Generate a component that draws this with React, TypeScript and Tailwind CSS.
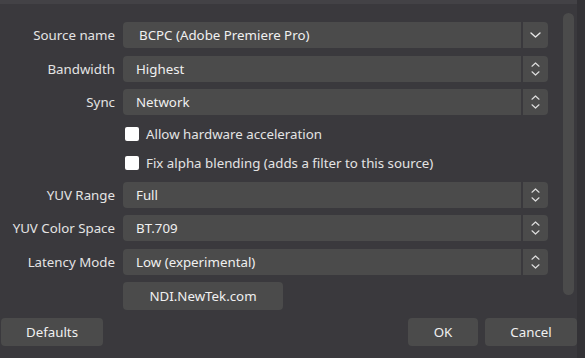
import React from "react";

const font = { fontFamily: '"Noto Sans", "Open Sans", sans-serif' };

function ChevronDown({ w = 11, h = 6 }: { w?: number; h?: number }) {
  return (
    <svg width={w} height={h} viewBox="0 0 11 6" fill="none">
      <path d="M1 1 L5.5 5 L10 1" stroke="#e6e6e6" strokeWidth="1.4" strokeLinecap="round" strokeLinejoin="round" />
    </svg>
  );
}

function Spinner() {
  return (
    <div className="flex flex-col items-center gap-[4px]">
      <svg width="9" height="5" viewBox="0 0 9 5" fill="none">
        <path d="M1 4.2 L4.5 1 L8 4.2" stroke="#dcdcdc" strokeWidth="1.2" strokeLinecap="round" strokeLinejoin="round" />
      </svg>
      <svg width="9" height="5" viewBox="0 0 9 5" fill="none">
        <path d="M1 0.8 L4.5 4 L8 0.8" stroke="#dcdcdc" strokeWidth="1.2" strokeLinecap="round" strokeLinejoin="round" />
      </svg>
    </div>
  );
}

function Combo({ value, kind, textPad = "pl-[13px]" }: { value: string; kind: "drop" | "spin"; textPad?: string }) {
  return (
    <div className="flex h-[26px] w-[425px]">
      <div className={`flex flex-1 items-center rounded-l-[4px] bg-[#4b4b4b] ${textPad} pt-[2px] text-[13.3px] text-[#f0f0f0]`}>{value}</div>
      <div className="w-[2px]" />
      <div className="flex w-[25px] items-center justify-center rounded-r-[4px] bg-[#4b4b4b]">
        {kind === "drop" ? <ChevronDown /> : <Spinner />}
      </div>
    </div>
  );
}

function Row({ label, children, h = "h-[26px]" }: { label?: string; children: React.ReactNode; h?: string }) {
  return (
    <div className={`flex ${h} items-center`}>
      <div className="w-[115px] pt-[2px] text-right text-[13.3px] text-[#e4e4e4]">{label}</div>
      <div className="ml-[8px] flex items-center">{children}</div>
    </div>
  );
}

function Check({ label }: { label: string }) {
  return (
    <div className="flex items-center">
      <div className="ml-[2px] h-[14px] w-[14px] rounded-[2px] bg-white" />
      <span className="ml-[7px] pt-[2px] text-[13.3px] text-[#e4e4e4]">{label}</span>
    </div>
  );
}

function Btn({ w, children, cls = "" }: { w: string; children: React.ReactNode; cls?: string }) {
  return (
    <div className={`flex h-[28px] ${w} ${cls} items-center justify-center rounded-[4px] bg-[#4b4b4b] pt-[2px] text-[13.3px] text-[#f0f0f0]`}>
      {children}
    </div>
  );
}

export default function App() {
  return (
    <div className="flex h-[358px] w-[585px] bg-[#333236]" style={font}>
      <div className="flex w-[577px] flex-col bg-[#3a393d]">
        <div className="h-[4px] bg-[#434246]" />
        <div className="flex h-[308px]">
          <div className="flex flex-1 flex-col gap-[7.5px] pt-[18px]">
            <Row label="Source name">
              <Combo value="BCPC (Adobe Premiere Pro)" kind="drop" textPad="pl-[16px]" />
            </Row>
            <Row label="Bandwidth">
              <Combo value="Highest" kind="spin" />
            </Row>
            <Row label="Sync">
              <Combo value="Network" kind="spin" />
            </Row>
            <Row h="h-[22px]">
              <Check label="Allow hardware acceleration" />
            </Row>
            <Row h="h-[22px]">
              <Check label="Fix alpha blending (adds a filter to this source)" />
            </Row>
            <Row label="YUV Range">
              <Combo value="Full" kind="spin" />
            </Row>
            <Row label="YUV Color Space">
              <Combo value="BT.709" kind="spin" />
            </Row>
            <Row label="Latency Mode">
              <Combo value="Low (experimental)" kind="spin" />
            </Row>
            <Row h="h-[28px]">
              <Btn w="w-[160px]">NDI.NewTek.com</Btn>
            </Row>
          </div>
          <div className="mr-[3px] mt-[9px] h-[282px] w-[11px] rounded-[6px] bg-[#4b4b4b]" />
        </div>
        <div className="mt-[6px] flex items-center">
          <Btn w="w-[102px]" cls="ml-[1px]">Defaults</Btn>
          <div className="flex-1" />
          <Btn w="w-[70px]">OK</Btn>
          <Btn w="w-[92px]" cls="ml-[7px]">Cancel</Btn>
        </div>
      </div>
    </div>
  );
}
